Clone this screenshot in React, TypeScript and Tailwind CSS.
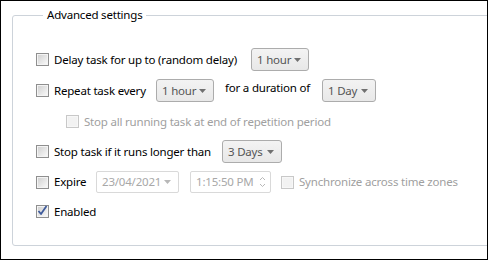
import React from "react";

function Check({ checked = false, disabled = false }: { checked?: boolean; disabled?: boolean }) {
  return (
    <span
      className={
        disabled
          ? "w-[13px] h-[13px] shrink-0 border border-[#c8c8c8] bg-[#f7f7f7] p-px flex"
          : "w-[13px] h-[13px] shrink-0 border border-[#8f8f8f] bg-[#f4f4f4] p-px flex"
      }
    >
      <span
        className={
          disabled
            ? "relative flex-1 bg-[#f2f2f2]"
            : "relative flex-1 bg-linear-to-br from-[#d2d2d2] to-[#f8f8f8]"
        }
      >
        {checked && (
          <svg className="absolute -left-[1px] -top-[2px]" width="11" height="11" viewBox="0 0 11 11">
            <path d="M1.5 6 L4 9 L9.5 1" fill="none" stroke="#3f5b9c" strokeWidth="1.8" strokeLinejoin="round" />
          </svg>
        )}
      </span>
    </span>
  );
}

function Arrow({ color = "#606060" }: { color?: string }) {
  return (
    <svg width="7" height="4" viewBox="0 0 7 4">
      <polygon points="0,0 7,0 3.5,4" fill={color} />
    </svg>
  );
}

function Combo({ text, className }: { text: string; className: string }) {
  return (
    <div
      className={
        "h-[23px] shrink-0 border border-[#acacac] rounded-[3px] bg-linear-to-b from-[#f3f3f3] to-[#e8e8e8] flex items-center justify-between pl-[5px] pr-[7px] text-[#555] " +
        className
      }
    >
      <span>{text}</span>
      <Arrow color="#707070" />
    </div>
  );
}

export default function App() {
  return (
    <div className="w-[488px] h-[260px] border border-black bg-white overflow-hidden font-['Noto_Sans',sans-serif] text-[11.5px] tracking-[-0.2px] leading-[16px] text-black whitespace-nowrap">
      <fieldset className="ml-[11px] mt-[6px] w-[500px] h-[239px] border border-[#cdd3da] rounded-[3px] pl-[23px] pt-[25px]">
        <legend className="ml-[7px] px-[4px] leading-[16px]">Advanced settings</legend>

        <div className="flex flex-col">
          {/* Row 1 */}
          <div className="h-[23px] flex items-center">
            <div className="w-[215px] flex items-center gap-[5px]">
              <Check />
              <span>Delay task for up to (random delay)</span>
            </div>
            <Combo text="1 hour" className="w-[58px]" />
          </div>

          {/* Row 2 */}
          <div className="mt-[8px] h-[23px] flex items-center">
            <div className="w-[120px] flex items-center gap-[5px]">
              <Check />
              <span>Repeat task every</span>
            </div>
            <Combo text="1 hour" className="w-[58px]" />
            <span className="ml-[11px] w-[97px] self-start pt-[1px]">for a duration of</span>
            <Combo text="1 Day" className="w-[54px]" />
          </div>

          {/* Row 3 */}
          <div className="mt-[8px] h-[23px] flex items-center gap-[5px] pl-[30px] text-[#a0a0a0]">
            <Check disabled />
            <span>Stop all running task at end of repetition period</span>
          </div>

          {/* Row 4 */}
          <div className="mt-[7px] h-[23px] flex items-center">
            <div className="w-[186px] flex items-center gap-[5px]">
              <Check />
              <span>Stop task if it runs longer than</span>
            </div>
            <Combo text="3 Days" className="w-[60px]" />
          </div>

          {/* Row 5 */}
          <div className="mt-[8px] h-[22px] flex items-center">
            <div className="w-[60px] flex items-center gap-[5px]">
              <Check />
              <span>Expire</span>
            </div>
            <div className="w-[83px] h-[22px] border border-[#d9d9d9] rounded-[2px] flex items-center justify-between pl-[5px] pr-[7px] text-[#a8a8a8]">
              <span>23/04/2021</span>
              <Arrow color="#b8b8b8" />
            </div>
            <div className="ml-[11px] w-[81px] h-[22px] border border-[#d9d9d9] rounded-[2px] flex items-center justify-between pl-[5px] pr-[4px] text-[#a8a8a8]">
              <span>1:15:50 PM</span>
              <svg width="7" height="14" viewBox="0 0 7 14">
                <polyline points="1,5 3.5,2.5 6,5" fill="none" stroke="#b8b8b8" strokeWidth="1" />
                <polyline points="1,9 3.5,11.5 6,9" fill="none" stroke="#b8b8b8" strokeWidth="1" />
              </svg>
            </div>
            <div className="ml-[10px] flex items-center gap-[5px] text-[#a0a0a0]">
              <Check disabled />
              <span>Synchronize across time zones</span>
            </div>
          </div>

          {/* Row 6 */}
          <div className="mt-[7px] h-[23px] flex items-center gap-[5px]">
            <Check checked />
            <span>Enabled</span>
          </div>
        </div>
      </fieldset>
    </div>
  );
}
